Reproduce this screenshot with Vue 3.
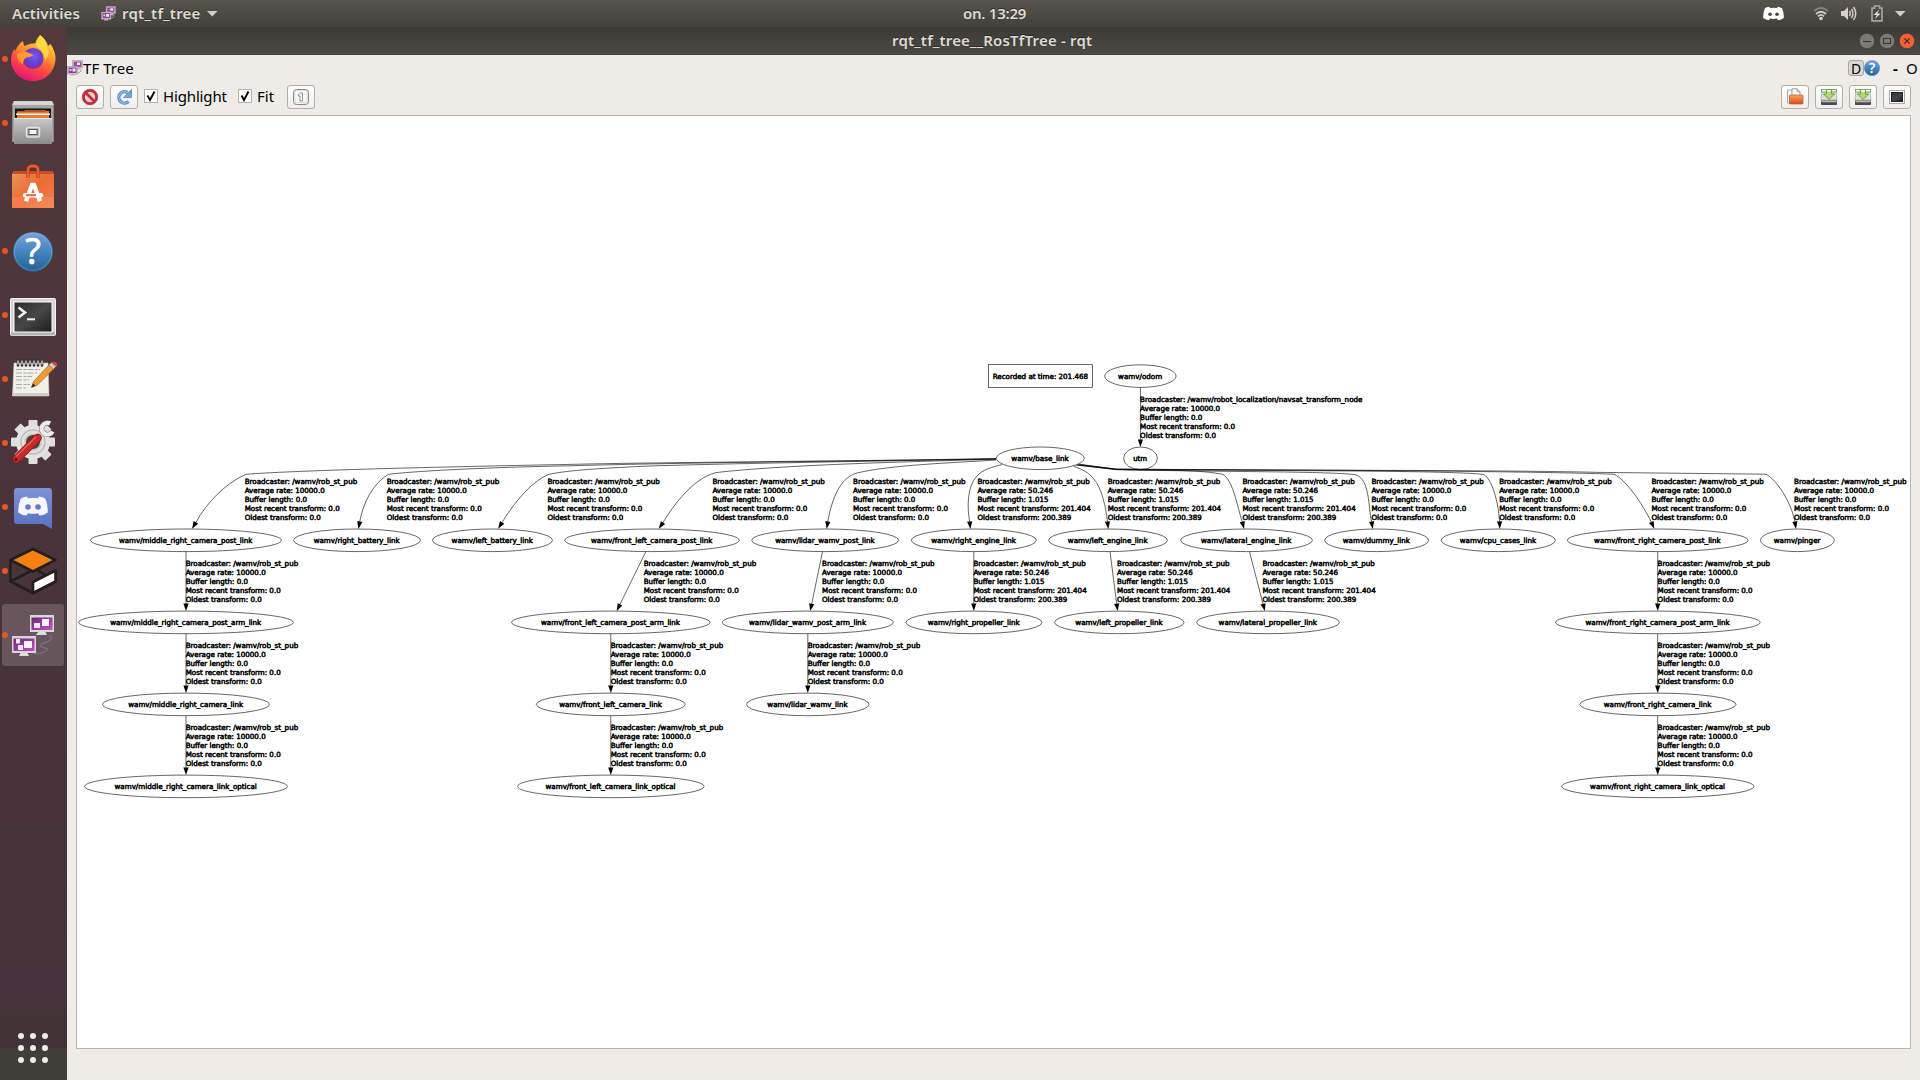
<script setup>
const rowY = [376, 458.2, 540.2, 622.3, 704.3, 786.3]

// [name, row, centre x, x radius, text width]
const nodes = [
  ['wamv/odom', 0, 1140.4, 36, 44],
  ['wamv/base_link', 1, 1040.3, 44.3, 57.3],
  ['utm', 1, 1140.5, 17.2, 14],
  ['wamv/middle_right_camera_post_link', 2, 186, 95.7, 133.5],
  ['wamv/right_battery_link', 2, 357, 63.7, 86],
  ['wamv/left_battery_link', 2, 492.5, 60.3, 81.3],
  ['wamv/front_left_camera_post_link', 2, 652, 87.5, 121.5],
  ['wamv/lidar_wamv_post_link', 2, 825.2, 73.8, 99.5],
  ['wamv/right_engine_link', 2, 973.8, 62.8, 84.7],
  ['wamv/left_engine_link', 2, 1108, 59.7, 79.7],
  ['wamv/lateral_engine_link', 2, 1246.5, 66.2, 90.3],
  ['wamv/dummy_link', 2, 1376.6, 52.3, 67],
  ['wamv/cpu_cases_link', 2, 1498.3, 57.4, 76.4],
  ['wamv/front_right_camera_post_link', 2, 1657.7, 90.6, 126.7],
  ['wamv/pinger', 2, 1797.4, 37.2, 46.8],
  ['wamv/middle_right_camera_post_arm_link', 3, 186, 107.7, 151],
  ['wamv/front_left_camera_post_arm_link', 3, 610.8, 99.5, 139],
  ['wamv/lidar_wamv_post_arm_link', 3, 807.8, 85.8, 117],
  ['wamv/right_propeller_link', 3, 974, 68.3, 92],
  ['wamv/left_propeller_link', 3, 1119.3, 65, 87.3],
  ['wamv/lateral_propeller_link', 3, 1268, 71.7, 98.3],
  ['wamv/front_right_camera_post_arm_link', 3, 1657.9, 102.6, 144.3],
  ['wamv/middle_right_camera_link', 4, 186, 83.7, 115],
  ['wamv/front_left_camera_link', 4, 610.8, 74.8, 102.7],
  ['wamv/lidar_wamv_link', 4, 807.8, 61.5, 80.3],
  ['wamv/front_right_camera_link', 4, 1657.9, 78.4, 107.8],
  ['wamv/middle_right_camera_link_optical', 5, 186, 101.7, 142.3],
  ['wamv/front_left_camera_link_optical', 5, 610.8, 93.5, 130],
  ['wamv/front_right_camera_link_optical', 5, 1657.9, 96.4, 135],
].map(([name, row, x, rx, w]) => ({ name, x, y: rowY[row], rx, w }))

const staticInfo = [
  ['Broadcaster: /wamv/rob_st_pub', 112.5],
  ['Average rate: 10000.0', 80],
  ['Buffer length: 0.0', 62.3],
  ['Most recent transform: 0.0', 95],
  ['Oldest transform: 0.0', 76],
]
const movingInfo = [
  ['Broadcaster: /wamv/rob_st_pub', 112.5],
  ['Average rate: 50.246', 75.7],
  ['Buffer length: 1.015', 71],
  ['Most recent transform: 201.404', 113.3],
  ['Oldest transform: 200.389', 94],
]
const odomInfo = [
  ['Broadcaster: /wamv/robot_localization/navsat_transform_node', 222.3],
  ...staticInfo.slice(1),
]
const label = (x, row, info = staticInfo) => ({ x: x - 0.3, y: 401.7 + 82 * row, info })
const labels = [
  label(1140.4, 0, odomInfo),
  ...[245, 387, 547.7, 712.7, 853.3, 1371.7, 1499.5, 1651.7, 1794.3].map((x) => label(x, 1)),
  ...[977.7, 1108, 1242.7].map((x) => label(x, 1, movingInfo)),
  ...[186, 644, 822.3, 1657.9].map((x) => label(x, 2)),
  ...[973.7, 1117.3, 1262.7].map((x) => label(x, 2, movingInfo)),
  ...[186, 611, 808, 1657.9].map((x) => label(x, 3)),
  ...[186, 611, 1657.9].map((x) => label(x, 4)),
]

// d: curve up to the arrowhead, tip: arrow point, a: heading in degrees
const edge = (d, tx, ty, a) => {
  const r = (a * Math.PI) / 180
  const bx = tx - 7 * Math.cos(r)
  const by = ty - 7 * Math.sin(r)
  return { d: `${d} ${bx.toFixed(1)} ${by.toFixed(1)}`, head: `translate(${tx} ${ty}) rotate(${a})` }
}
const down = (x, row) => edge(`M${x} ${rowY[row] + 11.5} L`, x, rowY[row + 1] - 11.5, 90)
const edges = [
  down(1140.4, 0),
  edge('M996 458.6 C860 461 640 462.5 570 464.4 C460 466.5 300 470 246 474.3 C224 484 206 504', 192.2, 528.6, 121),
  edge('M996 458.8 C880 461 680 462.5 570 465.8 C500 467 420 470.5 388.5 474.3 C372 484 363 504', 358.5, 528.6, 100),
  edge('M996 459 C880 461 700 464 640 466.4 C600 468.5 570 470 549 474.3 C530 482 512 506', 498.3, 528.6, 122),
  edge('M996 459.2 C900 462 780 465 716 472.6 C694 478 674 504', 659, 528.6, 124),
  edge('M996 460 C950 463 890 465 857 473 C838 478 831 504', 826.7, 528.6, 99),
  edge('M1002 464.6 C992 467 982 470 977 476 C967 486 967 508', 970.3, 528.6, 85),
  edge('M1073.7 466.3 C1082 469 1089 473 1093.3 478.3 C1102 488 1106 508', 1108.3, 528.6, 83),
  edge('M1076 465 L1116 469.6 C1150 471.2 1190 468.5 1222 474 C1233 479 1237 506', 1244, 528.6, 76),
  edge('M1077 465 L1116 469.4 C1200 472 1330 471 1356 474.8 C1370 480 1368 506', 1372.7, 528.6, 81),
  edge('M1078 464.7 L1116 469.3 C1240 471 1450 470 1484 474.5 C1492 480 1498 500', 1499.8, 528.6, 88),
  edge('M1079 464.5 L1116 469.2 C1300 470 1530 471 1614 474.2 C1626 480 1642 503', 1654.2, 528.6, 66),
  edge('M1080 464.3 L1116 469.2 C1300 470.4 1500 470 1600 472.4 L1766 474.2 C1777 480 1791 502', 1796, 528.6, 81),
  down(186, 2),
  edge('M645.8 551.7 L', 616.8, 610.8, 116.5),
  edge('M822.5 551.7 L', 810.3, 610.8, 101.5),
  down(973.8, 2),
  edge('M1110 551.7 L', 1117.6, 610.8, 83),
  edge('M1249.5 551.7 L', 1264.8, 610.8, 75.5),
  down(1657.7, 2),
  down(186, 3),
  down(610.8, 3),
  down(807.8, 3),
  down(1657.7, 3),
  down(186, 4),
  down(610.8, 4),
  down(1657.7, 4),
]
const gear = [0, 45, 90, 135, 180, 225, 270, 315]
</script>

<template>
  <div class="screen">
    <svg class="defs" width="0" height="0">
      <defs>
        <linearGradient id="ffBody" x1="0.8" y1="0" x2="0.35" y2="1">
          <stop offset="0" stop-color="#ffe64a" /><stop offset=".35" stop-color="#ffa52c" /><stop offset=".65" stop-color="#ff4f3b" /><stop offset="1" stop-color="#e8107c" />
        </linearGradient>
        <radialGradient id="ffGlobe" cx=".55" cy=".4" r=".6">
          <stop offset="0" stop-color="#7a5af5" /><stop offset=".6" stop-color="#6540cf" /><stop offset="1" stop-color="#8a2aa8" />
        </radialGradient>
        <linearGradient id="steel" x1="0" y1="0" x2="0" y2="1"><stop offset="0" stop-color="#c9c9c9" /><stop offset="1" stop-color="#8b8b8b" /></linearGradient>
        <linearGradient id="bag" x1="0" y1="0" x2="1" y2="1"><stop offset="0" stop-color="#e8985c" /><stop offset=".5" stop-color="#ee6a34" /><stop offset="1" stop-color="#f08050" /></linearGradient>
        <linearGradient id="blue" x1="0" y1="0" x2="0" y2="1"><stop offset="0" stop-color="#7aa3d8" /><stop offset=".5" stop-color="#4684c0" /><stop offset="1" stop-color="#23618f" /></linearGradient>
        <linearGradient id="dark" x1="0" y1="0" x2="1" y2="1"><stop offset="0" stop-color="#2b2b2b" /><stop offset=".5" stop-color="#474747" /><stop offset="1" stop-color="#1d1d1d" /></linearGradient>
        <linearGradient id="purple" x1="0" y1="0" x2="1" y2="1"><stop offset="0" stop-color="#6a2a74" /><stop offset="1" stop-color="#c34fc4" /></linearGradient>
        <linearGradient id="disc" x1="0" y1="0" x2="0" y2="1"><stop offset="0" stop-color="#7d92d8" /><stop offset="1" stop-color="#5870c0" /></linearGradient>
        <linearGradient id="folder" x1="0" y1="0" x2="0" y2="1"><stop offset="0" stop-color="#f7a468" /><stop offset="1" stop-color="#df4a1c" /></linearGradient>
        <symbol id="rqt" viewBox="0 0 48 48">
          <path d="M40 24c6 3 0 7-5 8s-4 4 1 5 2 5-11 6" fill="none" stroke="#77717a" stroke-width="1.3" />
          <path d="M30 20h6l2 4H27z" fill="#ddd" /><rect x="21" y="4" width="24" height="17" fill="#d9d5da" /><rect x="22.5" y="6.5" width="21" height="12.5" fill="url(#purple)" />
          <rect x="25" y="12" width="6" height="5" fill="#f0e6f2" /><rect x="33" y="8" width="7" height="7" fill="#f8f0fa" />
          <path d="M12 41h6l2 4H10z" fill="#ddd" /><rect x="3" y="25" width="24" height="17" fill="#d9d5da" /><rect x="4.500" y="27.500" width="21" height="12.5" fill="url(#purple)" />
          <rect x="7" y="28" width="4" height="4.500" fill="#f0e6f2" /><rect x="9" y="34" width="5" height="5" fill="#f0e6f2" /><rect x="15" y="30" width="8" height="7" fill="#f8f0fa" />
        </symbol>
        <symbol id="rqtSmall" viewBox="0 0 16 16">
          <path d="M13 9.500q3 1 0 2.500t-4 2.500" fill="none" stroke="#9c989c" stroke-width="1" /><path d="M10 8h3l.5 1.800h-4z" fill="#c8c5c8" />
          <rect x="5.500" y=".5" width="10" height="7.500" fill="#dcd8dc" stroke="#9a959b" stroke-width=".6" /><rect x="6.500" y="1.500" width="8" height="5.500" fill="#a04ba8" /><rect x="10" y="2.500" width="3" height="2.500" fill="#f4eaf5" />
          <path d="M4 13.500h3l1 2H3z" fill="#b5b2b5" />
          <rect x=".5" y="6.500" width="10" height="7.500" fill="#dcd8dc" stroke="#9a959b" stroke-width=".6" /><rect x="1.500" y="7.500" width="8" height="5.500" fill="#8e3c96" /><rect x="5.500" y="8.500" width="3" height="3" fill="#f4eaf5" /><rect x="2.500" y="9" width="2" height="2" fill="#e3cfe6" />
        </symbol>
        <symbol id="discord" viewBox="0 0 30 20">
          <path d="M9 .5Q5 1 2.800 2.500Q-.2 9 .3 16.500Q4 19.500 8.500 19.600L10 17.200Q15 18.300 20 17.200L21.500 19.600Q26 19.500 29.700 16.500Q30.200 9 27.200 2.500Q25 1 21 .5L20 2.200Q15 1.500 10 2.200Z" fill="currentColor" />
        </symbol>
        <symbol id="help" viewBox="0 0 48 48">
          <circle cx="24" cy="24.700" r="19.800" fill="url(#blue)" stroke="#2a5e8c" stroke-width=".6" />
          <circle cx="24" cy="24.700" r="18.600" fill="none" stroke="#9dbfe3" stroke-width=".6" opacity=".6" />
          <text x="24" y="37" text-anchor="middle" class="qmark">?</text>
        </symbol>
        <symbol id="save" viewBox="0 0 18 18">
          <path d="M2 3h14l1 9H1z" fill="#dededc" stroke="#999" stroke-width=".6" />
          <rect x="1" y="12" width="16" height="5" rx="1" fill="#4a4a4a" /><rect x="1.500" y="12.300" width="15" height="2" fill="#b5b5b5" />
          <rect x="1.500" y="1.500" width="15" height="2.500" fill="#fff" stroke="#5b9a38" stroke-width=".8" />
          <path d="M6.500 2h5V6h3L9 11.500 3.500 6h3z" fill="#b5d96a" stroke="#5b9a38" stroke-width=".9" /><path d="M7 2h4v1.600H7z" fill="#fff" />
        </symbol>
      </defs>
    </svg>

    <header class="topbar">
      <span class="activities">Activities</span>
      <svg class="app-icon" width="15" height="15"><use href="#rqtSmall" /></svg>
      <span class="app-name">rqt_tf_tree</span>
      <svg class="caret" width="11" height="6"><path d="M0 0h10.500L5.250 5.500z" fill="#d4d0c8" /></svg>
      <span class="clock">on. 13:29</span>
      <div class="tray">
        <svg class="t-discord" width="21" height="15" viewBox="0 0 30 20"><use href="#discord" color="#fff" /><circle cx="10" cy="11" r="2.500" fill="#47453f" /><circle cx="20" cy="11" r="2.500" fill="#47453f" /></svg>
        <svg class="t-wifi" width="16" height="15" viewBox="0 0 16 15" fill="none" stroke="#d4d0c8" stroke-width="1.700"><path d="M1 5Q8-1 15 5" opacity=".4" /><path d="M3 8Q8 3.500 13 8M5 10.300Q8 7.500 11 10.300" /><circle cx="8" cy="12.500" r="1.800" fill="#d4d0c8" stroke="none" /></svg>
        <svg class="t-vol" width="16" height="15" viewBox="0 0 16 15"><path d="M0 5h3l4-4v13l-4-4H0z" fill="#d4d0c8" /><path d="M8.500 5Q10 7.500 8.500 10M10.500 3Q13.300 7.500 10.500 12M12.500 1Q17 7.500 12.500 14" fill="none" stroke="#d4d0c8" stroke-width="1.500" /></svg>
        <svg class="t-bat" width="12" height="17" viewBox="0 0 12 17"><path d="M1 3.200h2.500V1h5v2.200H11v12.600H1z" fill="none" stroke="#a5a29a" stroke-width="1.700" /><path d="M8.500 4.500L2.500 10h3.300L4 14l5.500-5.500H6.300z" fill="#e4e0d8" /></svg>
        <svg width="11" height="6"><path d="M0 0h10.500L5.250 5.500z" fill="#d4d0c8" /></svg>
      </div>
    </header>

    <div class="desktop">
      <aside class="dock">
        <div class="slot running">
          <svg width="48" height="48" viewBox="0 0 48 48">
            <path d="M28 8L31 0Q37 4 39 11L41.500 9Q47 17 46.500 25C45 39 35 46.200 24 46.200S2 38 2 24Q3 16 5.500 14L6 16.500Q9 9 14 6L15 11Q22 8 28 8Z" fill="url(#ffBody)" />
            <path d="M31 0Q24 7 28 12Q35 15 36 25Q42 20 38 12Q36 4 31 0Z" fill="#ffdf45" opacity=".85" />
            <circle cx="24" cy="23.500" r="10.500" fill="url(#ffGlobe)" />
            <path d="M8 19Q13 15.500 18 17Q23 19 24.500 20Q21 22.500 17.500 22.500Q14 24 14 29Q8 27 8 19Z" fill="#ff9930" />
          </svg>
        </div>
        <div class="slot running">
          <svg width="48" height="48" viewBox="0 0 48 48">
            <path d="M5 2h38l1.700 3v38H3.300V5z" fill="#a5a5a5" /><path d="M5 2h38l1.700 4H3.300z" fill="#d5d5d5" />
            <rect x="6" y="9.500" width="36" height="12" fill="#171717" /><rect x="8" y="12" width="32" height="8" fill="#e07b38" /><path d="M8 12h7l1-1h21v2H8z" fill="#b9541c" /><rect x="7" y="14.500" width="34" height="1.500" fill="#fff3e6" />
            <rect x="5" y="19" width="38" height="26" fill="url(#steel)" /><path d="M5 19.500h38" stroke="#e4e4e4" />
            <rect x="17.500" y="28.500" width="13" height="9.500" rx="1.500" fill="#aaa" stroke="#e2e2e2" stroke-width="1.500" /><rect x="20" y="30.500" width="8" height="5" fill="#f4f4f4" stroke="#555" />
          </svg>
        </div>
        <div class="slot">
          <svg width="48" height="48" viewBox="0 0 48 48">
            <path d="M5 8h38l2 3v34H3V11z" fill="url(#bag)" /><path d="M5 8h38l2 3H3z" fill="#c94d20" /><rect x="3" y="34" width="42" height="11" fill="#ff9a70" opacity=".35" />
            <path d="M19 15V7q0-4 5-4t5 4v8" fill="none" stroke="#c8431a" stroke-width="3.400" /><path d="M19 15V7q0-4 5-4t5 4v8" fill="none" stroke="#ea6a3e" stroke-width="1.400" />
            <g stroke="#fff" stroke-width="4.300" fill="none"><path d="M17 38.300L23 22h2l6 16.300" /></g><path d="M16 32.200h16" stroke="#fff" stroke-width="4.500" stroke-linecap="round" /><path d="M17 32.200h10" stroke="#ee6a34" stroke-width="2" />
          </svg>
        </div>
        <div class="slot running"><svg width="48" height="48"><use href="#help" /></svg></div>
        <div class="slot running">
          <svg width="48" height="48" viewBox="0 0 48 48">
            <rect x="1.500" y="7.500" width="45" height="37" rx="1" fill="#d6d6d6" stroke="#f2f2f2" /><path d="M2 41h44v3.500H2z" fill="#b4b4b4" /><rect x="4.500" y="10.500" width="39" height="31" fill="#fafafa" /><rect x="5.500" y="11.500" width="37" height="29" fill="url(#dark)" />
            <path d="M9.500 16.500l6.500 5-6.500 5" fill="none" stroke="#eee" stroke-width="2.600" /><path d="M18 28.300h8" stroke="#eee" stroke-width="2" />
          </svg>
        </div>
        <div class="slot running">
          <svg width="48" height="48" viewBox="0 0 48 48">
            <path d="M5 8h34l1 33H3.500z" fill="#f1f1ec" stroke="#c9c9c0" stroke-width=".6" /><path d="M3.500 38h36.500v3H3z" fill="#d0d0c8" />
            <path d="M9 5.500v5M13 5.500v5M17 5.500v5M21 5.500v5M25 5.500v5M29 5.500v5M33 5.500v5" stroke="#333" stroke-width="2.600" stroke-linecap="round" /><path d="M9 5.500v4M13 5.500v4M17 5.500v4M21 5.500v4M25 5.500v4M29 5.500v4M33 5.500v4" stroke="#eee" stroke-width="1.200" />
            <path d="M7 14.500h24M7 18h21M7 21.500h16M7 25h13M7 29.500h14M7 33h10" stroke="#a9a9a5" stroke-width="1" stroke-dasharray="6 1.500 3 1" />
            <path d="M22.500 32.500l2-6L40 10l4.500 4L28.500 30z" fill="#f09a38" stroke="#a9601a" stroke-width=".7" /><path d="M22.500 32.500l1.500-4 2.500 2.200z" fill="#222" /><path d="M40 10l2.500-2.500 4.500 4L44.500 14z" fill="#ccc" /><path d="M42.500 7.500Q46 5.500 48 8.500T47 11.500z" fill="#e8433a" />
          </svg>
        </div>
        <div class="slot running">
          <svg width="48" height="48" viewBox="0 0 48 48">
            <g fill="#dededc"><rect v-for="a in gear" :key="a" x="19.500" y="1" width="9" height="10" rx="1" :transform="`rotate(${a} 24 23)`" /></g>
            <circle cx="24" cy="23" r="13" fill="#c8c8c8" stroke="#e2e2e0" stroke-width="8" /><circle cx="24" cy="23" r="12" fill="none" stroke="#bcbcbc" stroke-width="1.500" /><circle cx="24" cy="23" r="7" fill="#504045" />
            <path d="M28 19l8-8" stroke="#c9c9c9" stroke-width="6" />
            <path d="M41 4.500A5.800 5.800 0 1 0 43.500 12.500" fill="none" stroke="#777" stroke-width="5.200" /><path d="M41 4.500A5.800 5.800 0 1 0 43.500 12.500" fill="none" stroke="#ececec" stroke-width="4.200" />
            <path d="M7.500 40L28.500 19" stroke="#8d0f10" stroke-width="8.200" stroke-linecap="round" /><path d="M7.500 40L28.500 19" stroke="#c92a28" stroke-width="6.800" stroke-linecap="round" /><path d="M7 37.500L27 17.800" stroke="#e2625c" stroke-width="1.300" /><circle cx="7" cy="40.500" r="1.600" fill="#5a1012" />
          </svg>
        </div>
        <div class="slot running">
          <svg width="48" height="48" viewBox="0 0 48 48">
            <path d="M8 5h32q3 0 3 3v38l-9-5H8q-3 0-3-3V8q0-3 3-3z" fill="url(#disc)" /><svg x="9" y="13" width="30" height="20" viewBox="0 0 30 20"><use href="#discord" color="#f6f7fc" /></svg><circle cx="19" cy="24" r="2.800" fill="#6479c4" /><circle cx="29" cy="24" r="2.800" fill="#6479c4" />
          </svg>
        </div>
        <div class="slot running">
          <svg width="48" height="48" viewBox="0 0 48 48" stroke="#231f20" stroke-width="2.600" stroke-linejoin="round">
            <path d="M24 2L46.500 13 24 24.500 1.500 13z" fill="#f58113" /><path d="M1.500 13v21.500L24 46V35l22.500-11v10.500L24 46M1.500 34.500L22 24M28 23l18.500 11" fill="none" /><path d="M24 35l22.500-11.500v11L24 46z" fill="#fff" />
          </svg>
        </div>
        <div class="slot running active"><svg width="48" height="48"><use href="#rqt" /></svg></div>
        <div class="grow"></div>
        <svg class="apps" width="30" height="30" viewBox="0 0 30 30" fill="#eeecea"><g v-for="y in [3, 15, 27]" :key="y"><circle v-for="x in [3, 15, 27]" :key="x" :cx="x" :cy="y" r="3" /></g></svg>
      </aside>

      <main class="window">
        <div class="titlebar">
          <span class="title">rqt_tf_tree__RosTfTree - rqt</span>
          <div class="controls">
            <svg width="16" height="16"><circle cx="8" cy="8" r="7.700" fill="#7b7a73" stroke="#35342f" stroke-width=".6" /><path d="M4 8.500h8" stroke="#35342f" /></svg>
            <svg width="16" height="16"><circle cx="8" cy="8" r="7.700" fill="#7b7a73" stroke="#35342f" stroke-width=".6" /><rect x="4.500" y="5.500" width="7" height="5" fill="none" stroke="#35342f" /></svg>
            <svg width="16" height="16"><circle cx="8" cy="8" r="7.700" fill="#ed6237" stroke="#35342f" stroke-width=".6" /><path d="M5.300 5.300l5.400 5.400M10.700 5.300l-5.400 5.400" stroke="#46261a" stroke-width="1.200" /></svg>
          </div>
        </div>
        <div class="plugin-bar">
          <svg width="16" height="16"><use href="#rqtSmall" /></svg>
          <span class="plugin-name">TF Tree</span>
          <div class="grow"></div>
          <span class="d-btn">D</span>
          <svg width="16" height="16" viewBox="3.500 4.200 41 41"><use href="#help" width="48" height="48" /></svg>
          <span class="dash">-</span>
          <span class="oh">O</span>
        </div>
        <div class="toolbar">
          <button class="btn"><svg width="18" height="18" viewBox="0 0 18 18"><circle cx="9" cy="9" r="6.500" fill="#eccac9" stroke="#c0303a" stroke-width="2.600" /><path d="M4.500 4.500l9 9" stroke="#c0303a" stroke-width="2.600" /><circle cx="9" cy="9" r="7.800" fill="none" stroke="#8a1a28" stroke-width=".5" /></svg></button>
          <button class="btn"><svg width="18" height="18" viewBox="0 0 18 18"><path d="M13.500 13.500A5.700 5.700 0 1 1 12.500 4.500" fill="none" stroke="#4f8ac6" stroke-width="3.400" /><path d="M13.500 13.500A5.700 5.700 0 1 1 12.500 4.500" fill="none" stroke="#8ab6e2" stroke-width="1.600" /><path d="M16.500 1.500v8h-8z" fill="#72a6da" stroke="#4f8ac6" stroke-width=".8" /></svg></button>
          <span class="check"><svg width="12" height="12" viewBox="0 0 12 12"><path d="M2.500 5.500L5 10 9.500 1.500" fill="none" stroke="#000" stroke-width="1.900" /></svg></span>
          <span class="txt highlight">Highlight</span>
          <span class="check"><svg width="12" height="12" viewBox="0 0 12 12"><path d="M2.500 5.500L5 10 9.500 1.500" fill="none" stroke="#000" stroke-width="1.900" /></svg></span>
          <span class="txt fit">Fit</span>
          <button class="btn"><svg width="18" height="18" viewBox="0 0 18 18"><rect x="1.500" y="1.500" width="15" height="15" rx="3" fill="#eeeeec" stroke="#888" /><rect x="3" y="2.500" width="12" height="12" rx="2" fill="#f8f8f7" stroke="#ccc" stroke-width=".6" /><path d="M6.500 6.500l2-1.500h2v8h-2.500v-5h-1.500z" fill="#fff" stroke="#777" stroke-width=".8" /></svg></button>
          <div class="grow"></div>
          <button class="btn"><svg width="18" height="18" viewBox="0 0 18 18"><path d="M1.500 2h5l1.500 1.500V15H1.500z" fill="#f4f4f2" stroke="#999" stroke-width=".8" /><path d="M6 .8h5l3 3V12H6z" fill="#fff" stroke="#888" stroke-width=".8" /><path d="M11 .8v3h3" fill="none" stroke="#888" stroke-width=".8" /><rect x="3.500" y="7" width="13.500" height="9" rx=".8" fill="url(#folder)" stroke="#c4512a" stroke-width=".7" /></svg></button>
          <button class="btn"><svg width="18" height="18"><use href="#save" /></svg></button>
          <button class="btn"><svg width="18" height="18"><use href="#save" /></svg></button>
          <button class="btn"><svg width="18" height="18" viewBox="0 0 18 18"><rect x="1.500" y="2.500" width="15" height="13" fill="#fff" stroke="#aaa" /><rect x="3.500" y="4.500" width="11" height="9" fill="url(#dark)" stroke="#222" /></svg></button>
        </div>
        <div class="canvas">
          <svg class="graph" viewBox="77 116 1833 932" width="1833" height="932">
            <g fill="none" stroke="#000" stroke-width=".6">
              <path v-for="(e, i) in edges" :key="i" :d="e.d" />
              <ellipse v-for="n in nodes" :key="n.name" :cx="n.x" :cy="n.y + 0.1" :rx="n.rx - 0.3" ry="11.300" />
              <rect x="988.500" y="364.700" width="104" height="22.700" />
            </g>
            <path v-for="(e, i) in edges" :key="'h' + i" d="M.3 0L-7.200-2.600V2.600Z" :transform="e.head" />
            <text v-for="n in nodes" :key="'t' + n.name" :x="n.x - n.w / 2 - 0.3" :y="n.y + 2.700" :textLength="n.w" lengthAdjust="spacingAndGlyphs">{{ n.name }}</text>
            <text x="992.700" y="378.700" textLength="95.300" lengthAdjust="spacingAndGlyphs">Recorded at time: 201.468</text>
            <g v-for="(l, i) in labels" :key="'l' + i">
              <text v-for="([t, w], k) in l.info" :key="k" :x="l.x" :y="l.y + k * 9.070" :textLength="w" lengthAdjust="spacingAndGlyphs">{{ t }}</text>
            </g>
          </svg>
        </div>
      </main>
    </div>
  </div>
</template>

<style>
body { margin: 0; overflow: hidden; }
</style>

<style scoped>
.screen { width: 1920px; height: 1080px; display: flex; flex-direction: column; background: #efebe7; font-family: "Noto Sans", "Open Sans", sans-serif; overflow: hidden; }
.screen svg { display: block; flex: none; }
.defs { position: absolute; }
.grow { flex: 1; }
.topbar { height: 27px; flex: none; display: flex; align-items: center; background: linear-gradient(#57544c, #42413b); color: #dfdbd2; font-size: 15px; line-height: 20px; font-weight: 600; position: relative; white-space: nowrap; text-shadow: 0 -1px 0 #2d2c28; }
.activities { margin-left: 12px; width: 89px; letter-spacing: .1px; }
.app-name { margin-left: 6px; width: 85px; letter-spacing: .25px; }
.app-icon { margin-top: -1px; }
.clock { position: absolute; left: 963px; letter-spacing: -.25px; }
.tray { margin-left: auto; display: flex; align-items: center; padding-right: 14px; }
.t-discord { margin-right: 29px; }
.t-wifi { margin-right: 12px; }
.t-vol { margin-right: 14px; }
.t-bat { margin-right: 12px; }
.activities, .app-name, .clock { margin-top: -1px; }
.desktop { flex: 1; display: flex; min-height: 0; }
.dock { width: 67px; flex: none; display: flex; flex-direction: column; background: linear-gradient(#53383c 0, #4a343b 500px, #46323a 982px, #423436 982px, #413335 1021px, #3f3e38 1021px); }
.slot { height: 64px; flex: none; display: flex; align-items: center; justify-content: center; position: relative; padding-right: 1px; }
.slot svg { position: relative; }
.running::before { content: ""; position: absolute; left: 2px; top: 29px; width: 6px; height: 6px; border-radius: 50%; background: #e95420; z-index: 1; }
.active::after { content: ""; position: absolute; left: 2px; top: 1px; width: 62px; height: 62px; border-radius: 3px; background: #fff; opacity: .17; }
.active svg { z-index: 1; }
.apps { margin: 0 0 17px 18px; }
.qmark { font: 36px "Noto Sans", sans-serif; fill: #fff; stroke: #fff; stroke-width: .7px; }
.window { flex: 1; min-width: 0; display: flex; flex-direction: column; }
.titlebar { height: 28px; flex: none; position: relative; display: flex; align-items: center; background: linear-gradient(#3b3a35, #4b4943); color: #dfdbd2; font-size: 15px; line-height: 20px; font-weight: 600; white-space: nowrap; }
.title { margin: -2px 0 0 825px; letter-spacing: .2px; text-shadow: 0 -1px 0 #2a2925; }
.controls { margin: -1px 0 0 auto; display: flex; gap: 4px; padding-right: 5px; }
.plugin-bar { height: 27px; flex: none; display: flex; align-items: center; font-size: 15px; line-height: 20px; color: #000; overflow: hidden; padding-bottom: 1px; box-sizing: border-box; }
.plugin-name { margin-top: -1px; letter-spacing: .05px; }
.d-btn { box-sizing: border-box; width: 16px; height: 16px; border: 1px solid #aaa6a2; border-radius: 3px; background: #dcd8d5; line-height: 15px; text-align: center; font-size: 14px; }
.dash { margin-left: 13px; width: 13px; font-weight: 700; }
.oh { width: 14px; }
.toolbar { height: 33px; flex: none; display: flex; align-items: flex-start; padding: 3px 9px 0; box-sizing: border-box; }
.btn { box-sizing: border-box; width: 28px; height: 24px; margin: 0 6px 0 0; padding: 0; display: flex; align-items: center; justify-content: center; border: 1px solid #b2aeaa; border-radius: 3px; background: linear-gradient(#fff, #f0eeec); }
.toolbar .btn:last-child { margin-right: 0; }
.check { box-sizing: border-box; width: 14px; height: 14px; margin-top: 4px; border: 1px solid #b5b1ad; background: #fff; }
.txt { font-size: 15px; line-height: 22px; color: #000; }
.highlight { margin-left: 5px; width: 75px; }
.highlight { letter-spacing: -.15px; }
.fit { margin-left: 5px; width: 30px; }
.canvas { margin-left: 9px; width: 1833px; height: 932px; border: 1px solid #b8b4b0; background: #fff; }
.graph text { font-family: "DejaVu Sans Condensed", "DejaVu Sans", sans-serif; font-size: 7.2px; fill: #000; stroke: #000; stroke-width: .45px; text-rendering: geometricPrecision; white-space: pre; }
</style>
